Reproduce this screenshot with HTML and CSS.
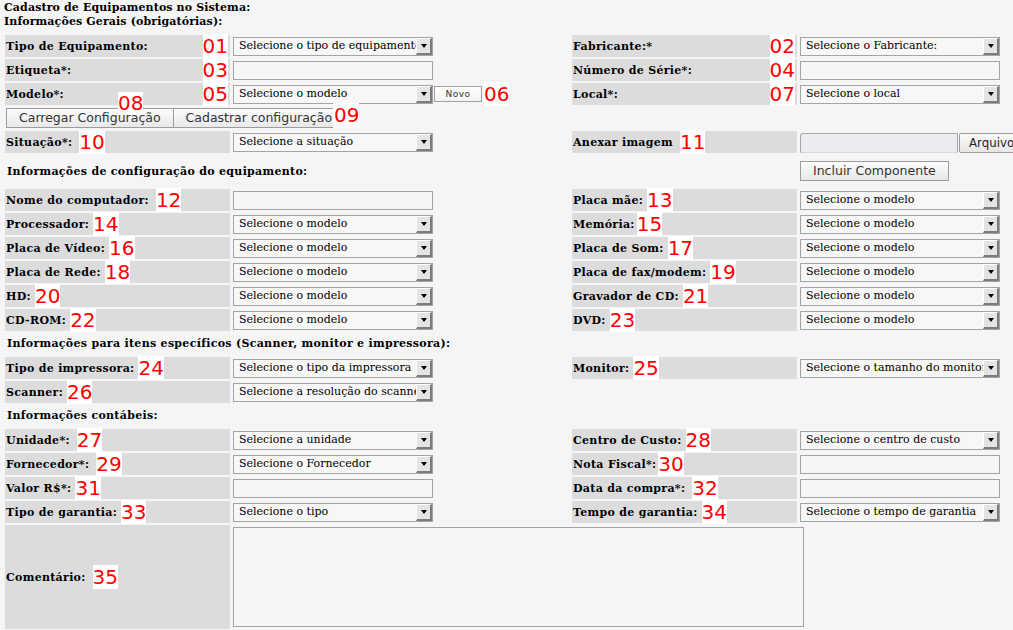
FILE: index.html
```html
<!DOCTYPE html>
<html lang="pt-BR">
<head>
<meta charset="utf-8">
<title>Cadastro de Equipamentos</title>
<link rel="stylesheet" href="styles.css">
</head>
<body>
<div class="header">
  <div class="title">Cadastro de Equipamentos no Sistema:</div>
  <div class="title">Informações Gerais (obrigatórias):</div>
</div>
<form class="form">
  <!-- row 1 -->
  <div class="lbl"><span>Tipo de Equipamento:</span><span class="num end">01</span></div>
  <div class="val"><div class="sel"><span class="sel-text">Selecione o tipo de equipamento</span><span class="sel-btn"></span></div></div>
  <div class="lbl"><span>Fabricante:*</span><span class="num end">02</span></div>
  <div class="val"><div class="sel"><span class="sel-text">Selecione o Fabricante:</span><span class="sel-btn"></span></div></div>
  <!-- row 2 -->
  <div class="lbl"><span>Etiqueta*:</span><span class="num end">03</span></div>
  <div class="val"><input class="txt" type="text"></div>
  <div class="lbl"><span>Número de Série*:</span><span class="num end">04</span></div>
  <div class="val"><input class="txt" type="text"></div>
  <!-- row 3 -->
  <div class="lbl"><span>Modelo*:</span><span class="num end">05</span></div>
  <div class="val"><div class="sel"><span class="sel-text">Selecione o modelo</span><span class="sel-btn"></span></div><button type="button" class="novo">Novo</button><span class="num after">06</span></div>
  <div class="lbl"><span>Local*:</span><span class="num end">07</span></div>
  <div class="val"><div class="sel"><span class="sel-text">Selecione o local</span><span class="sel-btn"></span></div></div>
  <!-- row 4 -->
  <div class="val buttons">
    <button type="button" class="btn">Carregar Configuração</button><button type="button" class="btn joined">Cadastrar configuração</button>
    <span class="num badge-08">08</span>
    <span class="num badge-09">09</span>
  </div>
  <div class="empty"></div>
  <div class="empty"></div>
  <!-- row 5 -->
  <div class="lbl"><span>Situação*:</span><span class="num wide">10</span></div>
  <div class="val"><div class="sel"><span class="sel-text">Selecione a situação</span><span class="sel-btn"></span></div></div>
  <div class="lbl"><span>Anexar imagem</span><span class="num wide">11</span></div>
  <div class="val"><div class="file"><span class="file-box"></span><span class="file-btn">Arquivo...</span></div></div>
  <!-- row 6 -->
  <div class="section sec-tall">Informações de configuração do equipamento:</div>
  <div class="val sec-tall"><button type="button" class="btn">Incluir Componente</button></div>
  <!-- rows 7-12 -->
  <div class="lbl"><span>Nome do computador:</span><span class="num wide">12</span></div>
  <div class="val"><input class="txt" type="text"></div>
  <div class="lbl"><span>Placa mãe:</span><span class="num">13</span></div>
  <div class="val"><div class="sel"><span class="sel-text">Selecione o modelo</span><span class="sel-btn"></span></div></div>

  <div class="lbl"><span>Processador:</span><span class="num">14</span></div>
  <div class="val"><div class="sel"><span class="sel-text">Selecione o modelo</span><span class="sel-btn"></span></div></div>
  <div class="lbl"><span>Memória:</span><span class="num tight">15</span></div>
  <div class="val"><div class="sel"><span class="sel-text">Selecione o modelo</span><span class="sel-btn"></span></div></div>

  <div class="lbl"><span>Placa de Vídeo:</span><span class="num">16</span></div>
  <div class="val"><div class="sel"><span class="sel-text">Selecione o modelo</span><span class="sel-btn"></span></div></div>
  <div class="lbl"><span>Placa de Som:</span><span class="num">17</span></div>
  <div class="val"><div class="sel"><span class="sel-text">Selecione o modelo</span><span class="sel-btn"></span></div></div>

  <div class="lbl"><span>Placa de Rede:</span><span class="num">18</span></div>
  <div class="val"><div class="sel"><span class="sel-text">Selecione o modelo</span><span class="sel-btn"></span></div></div>
  <div class="lbl"><span>Placa de fax/modem:</span><span class="num">19</span></div>
  <div class="val"><div class="sel"><span class="sel-text">Selecione o modelo</span><span class="sel-btn"></span></div></div>

  <div class="lbl"><span>HD:</span><span class="num">20</span></div>
  <div class="val"><div class="sel"><span class="sel-text">Selecione o modelo</span><span class="sel-btn"></span></div></div>
  <div class="lbl"><span>Gravador de CD:</span><span class="num">21</span></div>
  <div class="val"><div class="sel"><span class="sel-text">Selecione o modelo</span><span class="sel-btn"></span></div></div>

  <div class="lbl"><span>CD-ROM:</span><span class="num">22</span></div>
  <div class="val"><div class="sel"><span class="sel-text">Selecione o modelo</span><span class="sel-btn"></span></div></div>
  <div class="lbl"><span>DVD:</span><span class="num">23</span></div>
  <div class="val"><div class="sel"><span class="sel-text">Selecione o modelo</span><span class="sel-btn"></span></div></div>
  <!-- row 13 -->
  <div class="section sec-full">Informações para itens específicos (Scanner, monitor e impressora):</div>
  <!-- rows 14-15 -->
  <div class="lbl"><span>Tipo de impressora:</span><span class="num">24</span></div>
  <div class="val"><div class="sel"><span class="sel-text">Selecione o tipo da impressora</span><span class="sel-btn"></span></div></div>
  <div class="lbl"><span>Monitor:</span><span class="num">25</span></div>
  <div class="val"><div class="sel"><span class="sel-text">Selecione o tamanho do monitor</span><span class="sel-btn"></span></div></div>

  <div class="lbl"><span>Scanner:</span><span class="num">26</span></div>
  <div class="val"><div class="sel"><span class="sel-text">Selecione a resolução do scanner</span><span class="sel-btn"></span></div></div>
  <div class="empty"></div>
  <div class="empty"></div>
  <!-- row 16 -->
  <div class="section sec-full">Informações contábeis:</div>
  <!-- rows 17-20 -->
  <div class="lbl"><span>Unidade*:</span><span class="num wide">27</span></div>
  <div class="val"><div class="sel"><span class="sel-text">Selecione a unidade</span><span class="sel-btn"></span></div></div>
  <div class="lbl"><span>Centro de Custo:</span><span class="num">28</span></div>
  <div class="val"><div class="sel"><span class="sel-text">Selecione o centro de custo</span><span class="sel-btn"></span></div></div>

  <div class="lbl"><span>Fornecedor*:</span><span class="num wide">29</span></div>
  <div class="val"><div class="sel"><span class="sel-text">Selecione o Fornecedor</span><span class="sel-btn"></span></div></div>
  <div class="lbl"><span>Nota Fiscal*:</span><span class="num tight">30</span></div>
  <div class="val"><input class="txt" type="text"></div>

  <div class="lbl"><span>Valor R$*:</span><span class="num">31</span></div>
  <div class="val"><input class="txt" type="text"></div>
  <div class="lbl"><span>Data da compra*:</span><span class="num wide">32</span></div>
  <div class="val"><input class="txt" type="text"></div>

  <div class="lbl"><span>Tipo de garantia:</span><span class="num">33</span></div>
  <div class="val"><div class="sel"><span class="sel-text">Selecione o tipo</span><span class="sel-btn"></span></div></div>
  <div class="lbl"><span>Tempo de garantia:</span><span class="num">34</span></div>
  <div class="val"><div class="sel"><span class="sel-text">Selecione o tempo de garantia</span><span class="sel-btn"></span></div></div>
  <!-- row 21 -->
  <div class="lbl lbl-comment"><span>Comentário:</span><span class="num wide">35</span></div>
  <div class="val val-comment"><textarea class="area"></textarea></div>
  <!-- row 22 -->
  <div class="lbl"></div>
</form>
</body>
</html>
```

FILE: styles.css
```css
html {
  overflow: hidden;
  background: #f5f5f5;
}

body {
  margin: 0;
  background: #f5f5f5;
  color: #000;
  font-family: "DejaVu Serif", serif;
  font-size: 11px;
}

.header {
  padding: 1px 0 0 4px;
}

.title {
  font-weight: bold;
  line-height: 14px;
  height: 14px;
  letter-spacing: 0.12px;
  white-space: nowrap;
}

.form {
  display: grid;
  grid-template-columns: 225px 338px 225px 262px;
  grid-auto-rows: minmax(22px, auto);
  gap: 2px;
  margin: 6px 0 0 5px;
  width: max-content;
}

.lbl {
  height: 22px;
  background: #dcdcdc;
  display: flex;
  align-items: center;
  gap: 4px;
  padding: 0 1px;
  font-weight: bold;
  letter-spacing: 0.3px;
  white-space: nowrap;
}

.val {
  height: 22px;
  display: flex;
  align-items: center;
  padding: 0 1px;
}

.empty {
  height: 22px;
}

.num {
  flex: none;
  height: 24px;
  line-height: 24px;
  background: #fff;
  color: #f00;
  font-family: "DejaVu Sans", sans-serif;
  font-weight: normal;
  font-size: 20px;
  letter-spacing: 0;
}

.num.end {
  margin-left: auto;
  margin-right: 1px;
}

.num.wide {
  margin-left: 3px;
}

.num.tight {
  margin-left: -2px;
}

.num.after {
  margin-left: 2px;
}

/* fake select */
.sel {
  flex: none;
  width: 200px;
  height: 19px;
  box-sizing: border-box;
  border: 1px solid #a4a4a4;
  background: #f7f7f7;
  display: flex;
}

.sel-text {
  flex: 1;
  min-width: 0;
  overflow: hidden;
  white-space: nowrap;
  padding-left: 5px;
  line-height: 16px;
  font-family: "DejaVu Serif", serif;
  font-size: 11px;
  color: #000;
}

.sel-btn {
  flex: none;
  width: 13px;
  box-sizing: content-box;
  background: #e4e4e4;
  border-left: 1px solid #ffffff;
  border-top: 1px solid #ffffff;
  border-right: 2px solid #7c7c7c;
  border-bottom: 2px solid #7c7c7c;
  display: flex;
  align-items: center;
  justify-content: center;
}

.sel-btn::after {
  content: "";
  border-left: 3.5px solid transparent;
  border-right: 3.5px solid transparent;
  border-top: 4px solid #000;
}

.txt {
  width: 200px;
  height: 19px;
  box-sizing: border-box;
  margin: 0;
  padding: 0 3px;
  border: 1px solid #a4a4a4;
  background: #f6f6f6;
  font-family: "DejaVu Serif", serif;
  font-size: 11px;
}

.novo {
  height: 16px;
  width: 48px;
  margin: 0 0 0 1px;
  padding: 0;
  border: 1px solid #a0a0a0;
  background: linear-gradient(#ffffff, #f3f3f3);
  color: #333;
  font-family: "DejaVu Sans", sans-serif;
  font-size: 9px;
  letter-spacing: 0.5px;
}

.btn {
  height: 20px;
  margin: 0;
  padding: 0 12px;
  border: 1px solid #9c9c9c;
  background: linear-gradient(#fcfcfc, #e8e8e8);
  color: #333;
  font-family: "DejaVu Sans", sans-serif;
  font-size: 12.5px;
  line-height: 18px;
  white-space: nowrap;
}

.btn.joined {
  margin-left: -1px;
}

.buttons {
  grid-column: 1 / 3;
  position: relative;
}

.badge-08 {
  position: absolute;
  left: 113px;
  top: -15px;
  height: 23px;
  line-height: 23px;
}

.badge-09 {
  position: absolute;
  left: 328px;
  top: -4px;
  height: 25px;
  line-height: 25px;
  padding-left: 1px;
}

/* file input */
.file {
  display: flex;
  align-items: flex-end;
  height: 20px;
  margin-top: 2px;
}

.file-box {
  width: 158px;
  height: 20px;
  box-sizing: border-box;
  border: 1px solid #a8a8a8;
  border-bottom-color: #d8d8dc;
  border-radius: 3px 0 0 0;
  background: #ececf0;
}

.file-btn {
  height: 20px;
  box-sizing: border-box;
  margin-left: 1px;
  padding: 0 8px 0 9px;
  border: 1px solid #9c9c9c;
  border-radius: 2px;
  background: linear-gradient(#fafafa, #e6e6e6);
  color: #222;
  font-family: "DejaVu Sans", sans-serif;
  font-size: 11.8px;
  line-height: 18px;
  white-space: nowrap;
}

/* section headings */
.section {
  display: flex;
  align-items: center;
  padding-left: 2px;
  font-weight: bold;
  letter-spacing: 0.3px;
  white-space: nowrap;
}

.sec-tall {
  height: 32px;
}

.section.sec-tall {
  grid-column: 1 / 4;
}

.sec-full {
  grid-column: 1 / 5;
  height: 21px;
}

/* comment row */
.lbl-comment {
  height: 104px;
}

.val-comment {
  grid-column: 2 / 5;
  height: 104px;
  align-items: flex-start;
}

.area {
  width: 571px;
  height: 100px;
  box-sizing: border-box;
  margin: 2px 0 0 0;
  padding: 2px;
  border: 1px solid #a4a4a4;
  background: #f6f6f6;
  resize: none;
}
```
